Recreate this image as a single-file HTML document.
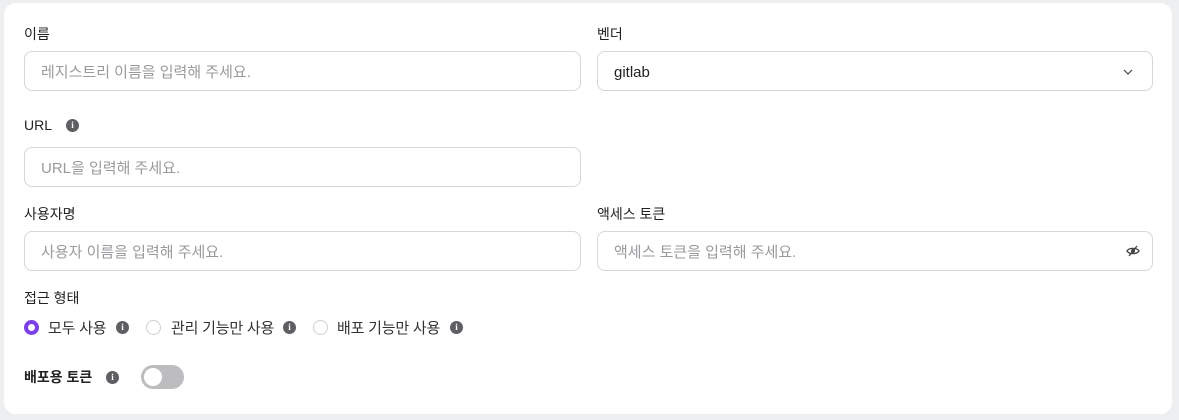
<!DOCTYPE html>
<html><head><meta charset="utf-8"><style>
*{box-sizing:border-box;margin:0;padding:0}
body{width:1179px;height:420px;background:#eeeff1;font-family:"Liberation Sans","Noto Sans CJK KR",sans-serif;font-size:14px;color:#222;position:relative;overflow:hidden}
.card{position:absolute;left:4px;top:3px;width:1168px;height:411px;background:#fff;border-radius:12px}
.a{position:absolute;white-space:nowrap}
.lbl{font-size:14px;color:#222;line-height:20px}
.inp{position:absolute;height:40px;border:1px solid #d6d6d9;border-radius:8px;font-size:15px;color:#9a9a9e;line-height:38px;padding-left:16px;padding-top:2px}
.info{position:absolute;width:13px;height:13px;border-radius:50%;background:#5f5f63;color:#fff;font-size:9px;font-weight:bold;text-align:center;line-height:13px;font-family:"Liberation Serif",serif}
.rad{position:absolute;width:15px;height:15px;border-radius:50%;border:1px solid #cfcfd3;background:#fff}
.rad.on{border:4px solid #7b3fe4}
</style></head><body>
<div class="card"></div>
<div class="a lbl" style="left:24px;top:24px">이름</div>
<div class="inp" style="left:24px;top:51px;width:557px">레지스트리 이름을 입력해 주세요.</div>
<div class="a lbl" style="left:597px;top:24px">벤더</div>
<div class="inp" style="left:597px;top:51px;width:556px;color:#222">gitlab</div>
<svg class="a" style="left:1123px;top:69px" width="10" height="6" viewBox="0 0 10 6"><path d="M1 1l4 4 4-4" stroke="#444" stroke-width="1.2" fill="none"/></svg>
<div class="a lbl" style="left:24px;top:115px">URL</div>
<div class="info" style="left:66px;top:119px">i</div>
<div class="inp" style="left:24px;top:147px;width:557px">URL을 입력해 주세요.</div>
<div class="a lbl" style="left:24px;top:204px">사용자명</div>
<div class="inp" style="left:24px;top:231px;width:557px">사용자 이름을 입력해 주세요.</div>
<div class="a lbl" style="left:597px;top:204px">액세스 토큰</div>
<div class="inp" style="left:597px;top:231px;width:556px">액세스 토큰을 입력해 주세요.</div>
<svg class="a" style="left:1126px;top:245px" width="14" height="12" viewBox="0 0 14 12"><path d="M1 6c2-3.5 10-3.5 12 0c-2 3.5-10 3.5-12 0z" stroke="#444" stroke-width="1.3" fill="none"/><circle cx="7" cy="6" r="2" fill="#444"/><path d="M3 11L11 1" stroke="#444" stroke-width="1.3"/></svg>
<div class="a lbl" style="left:24px;top:288px">접근 형태</div>
<div class="rad on" style="left:24px;top:320px"></div>
<div class="a" style="left:48px;top:317px;font-size:15px;color:#333;letter-spacing:-0.2px">모두 사용</div>
<div class="info" style="left:116px;top:321px">i</div>
<div class="rad" style="left:146px;top:320px"></div>
<div class="a" style="left:171px;top:317px;font-size:15px;color:#333;letter-spacing:-0.2px">관리 기능만 사용</div>
<div class="info" style="left:283px;top:321px">i</div>
<div class="rad" style="left:313px;top:320px"></div>
<div class="a" style="left:337px;top:317px;font-size:15px;color:#333;letter-spacing:-0.2px">배포 기능만 사용</div>
<div class="info" style="left:450px;top:321px">i</div>
<div class="a lbl" style="left:24px;top:367px;font-weight:bold">배포용 토큰</div>
<div class="info" style="left:106px;top:371px">i</div>
<div class="a" style="left:141px;top:365px;width:43px;height:24px;border-radius:12px;background:#bdbdc0"></div>
<div class="a" style="left:144px;top:368px;width:18px;height:18px;border-radius:50%;background:#fff"></div>
</body></html>
